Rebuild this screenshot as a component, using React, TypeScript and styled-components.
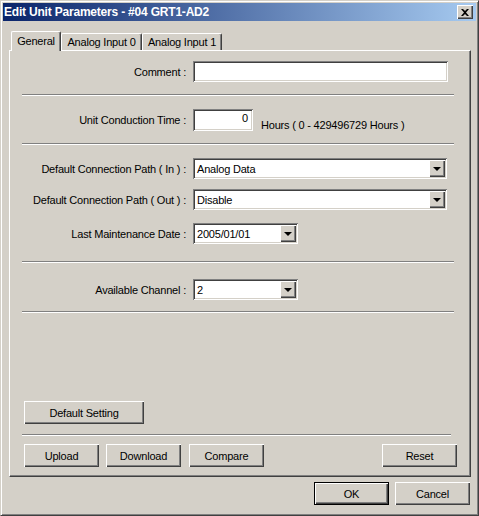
import React from "react";
import styled, { createGlobalStyle } from "styled-components";

const face = "#d4d0c8";
const shade = "#808080";
const dark = "#404040";
const light = "#ffffff";

const GlobalStyle = createGlobalStyle`
  html, body {
    margin: 0;
    padding: 0;
    background: ${face};
  }
  body {
    font-family: "Liberation Sans", Arial, sans-serif;
    font-size: 11px;
    letter-spacing: -0.2px;
    color: #000;
  }
  * { box-sizing: border-box; }
`;

const Window = styled.div`
  width: 479px;
  height: 516px;
  display: flex;
  flex-direction: column;
  background: ${face};
  border: 1px solid;
  border-color: ${face} ${dark} ${dark} ${face};
  box-shadow: inset 1px 1px ${light}, inset -1px -1px ${shade};
  padding: 2px 2px 10px 2px;
`;

const TitleBar = styled.div`
  height: 18px;
  flex: 0 0 18px;
  display: flex;
  align-items: center;
  justify-content: space-between;
  padding: 0 3px 0 1px;
  background: linear-gradient(to right, #0a246a, #a6caf0);
`;

const Title = styled.span`
  color: #fff;
  font-weight: bold;
  font-size: 12px;
  white-space: nowrap;
`;

const CloseButton = styled.div`
  width: 16px;
  height: 14px;
  display: flex;
  align-items: center;
  justify-content: center;
  background: ${face};
  box-shadow: inset 1px 1px ${light}, inset -1px -1px ${dark}, inset -2px -2px ${shade};
`;

const Body = styled.div`
  flex: 1;
  display: flex;
  flex-direction: column;
  padding: 0 5px 0 6px;
`;

const TabStrip = styled.div`
  margin-top: 10px;
  height: 19px;
  display: flex;
  align-items: flex-end;
  padding-left: 2px;
  position: relative;
  z-index: 1;
`;

const Tab = styled.div<{ $active?: boolean; $w: number }>`
  width: ${(p) => p.$w}px;
  height: ${(p) => (p.$active ? 20 : 17)}px;
  margin-bottom: ${(p) => (p.$active ? -1 : 0)}px;
  background: ${face};
  border-top: 1px solid ${light};
  border-left: 1px solid ${light};
  border-right: 1px solid ${dark};
  border-radius: 2px 2px 0 0;
  box-shadow: inset -1px 0 ${shade};
  display: flex;
  justify-content: center;
  padding-top: ${(p) => (p.$active ? 3 : 2)}px;
  white-space: nowrap;
`;

const Panel = styled.div`
  flex: 1;
  display: flex;
  flex-direction: column;
  border-top: 1px solid ${light};
  border-left: 1px solid ${light};
  border-right: 1px solid ${dark};
  border-bottom: 1px solid ${dark};
  box-shadow: inset -1px -1px ${shade};
  padding-bottom: 9px;
`;

const Row = styled.div<{ $top: number; $align?: string }>`
  margin-top: ${(p) => p.$top}px;
  display: flex;
  align-items: ${(p) => p.$align || "center"};
  gap: 7px;
`;

const Label = styled.span<{ $offset?: number }>`
  flex: 0 0 176px;
  margin-top: ${(p) => p.$offset || 0}px;
  text-align: right;
  white-space: nowrap;
`;

const Separator = styled.div<{ $top: number; $w: number }>`
  margin: ${(p) => p.$top}px 0 0 12px;
  width: ${(p) => p.$w}px;
  height: 2px;
  border-top: 1px solid ${shade};
  border-bottom: 1px solid ${light};
`;

const sunken = `
  background: #fff;
  box-shadow: inset 1px 1px ${shade}, inset -1px -1px ${light}, inset 2px 2px ${dark}, inset -2px -2px ${face};
`;

const TextBox = styled.div<{ $w: number; $h?: number }>`
  ${sunken}
  width: ${(p) => p.$w}px;
  height: ${(p) => p.$h || 21}px;
  padding: 3px 5px 0 4px;
  text-align: right;
`;

const Combo = styled.div<{ $w: number }>`
  ${sunken}
  width: ${(p) => p.$w}px;
  height: 21px;
  display: flex;
  align-items: center;
  padding: 2px;
`;

const ComboValue = styled.span`
  flex: 1;
  padding-left: 2px;
  white-space: nowrap;
`;

const DropButton = styled.div`
  width: 16px;
  height: 17px;
  background: ${face};
  box-shadow: inset 1px 1px ${light}, inset -1px -1px ${dark}, inset -2px -2px ${shade};
  display: flex;
  align-items: center;
  justify-content: center;
`;

const Arrow = styled.div`
  width: 0;
  height: 0;
  border-left: 4px solid transparent;
  border-right: 4px solid transparent;
  border-top: 4px solid #000;
  margin: 1px 0 0 -1px;
`;

const Hint = styled.span`
  margin: 10px 0 0 1px;
  line-height: 12px;
  white-space: nowrap;
`;

const Spacer = styled.div`
  flex: 1;
`;

const Button = styled.div<{ $w: number; $default?: boolean }>`
  width: ${(p) => p.$w}px;
  height: 23px;
  flex: 0 0 auto;
  display: flex;
  align-items: center;
  justify-content: center;
  background: ${face};
  white-space: nowrap;
  border: ${(p) => (p.$default ? "1px solid #000" : "none")};
  box-shadow: inset 1px 1px ${light}, inset -1px -1px ${dark}, inset -2px -2px ${shade};
`;

const ButtonRow = styled.div<{ $top: number }>`
  margin: ${(p) => p.$top}px 13px 0 14px;
  display: flex;
  gap: 7px;
`;

const PushRight = styled.div`
  flex: 1;
`;

const Footer = styled.div`
  margin-top: 5px;
  display: flex;
  justify-content: flex-end;
  gap: 6px;
  padding-right: 1px;
`;

function ComboBox({ width, value }: { width: number; value: string }) {
  return (
    <Combo $w={width}>
      <ComboValue>{value}</ComboValue>
      <DropButton>
        <Arrow />
      </DropButton>
    </Combo>
  );
}

export default function App() {
  return (
    <>
      <GlobalStyle />
      <Window>
        <TitleBar>
          <Title>Edit Unit Parameters - #04 GRT1-AD2</Title>
          <CloseButton>
            <svg width="8" height="7" viewBox="0 0 8 7">
              <path d="M0 0h2l2 2 2-2h2L5 3.5 8 7H6L4 5 2 7H0l3-3.5z" fill="#000" />
            </svg>
          </CloseButton>
        </TitleBar>
        <Body>
          <TabStrip>
            <Tab $active $w={50}>General</Tab>
            <Tab $w={81}>Analog Input 0</Tab>
            <Tab $w={80}>Analog Input 1</Tab>
          </TabStrip>
          <Panel>
            <Row $top={10}>
              <Label>Comment :</Label>
              <TextBox $w={255} />
            </Row>
            <Separator $top={12} $w={432} />
            <Row $top={13} $align="flex-start">
              <Label $offset={5}>Unit Conduction Time :</Label>
              <TextBox $w={60} $h={22}>0</TextBox>
              <Hint>Hours ( 0 - 429496729 Hours )</Hint>
            </Row>
            <Separator $top={12} $w={432} />
            <Row $top={13}>
              <Label>Default Connection Path ( In ) :</Label>
              <ComboBox width={254} value="Analog Data" />
            </Row>
            <Row $top={10}>
              <Label>Default Connection Path ( Out ) :</Label>
              <ComboBox width={254} value="Disable" />
            </Row>
            <Row $top={13}>
              <Label>Last Maintenance Date :</Label>
              <ComboBox width={105} value="2005/01/01" />
            </Row>
            <Separator $top={17} $w={432} />
            <Row $top={16}>
              <Label>Available Channel :</Label>
              <ComboBox width={105} value="2" />
            </Row>
            <Separator $top={11} $w={432} />
            <Spacer />
            <ButtonRow $top={0}>
              <Button $w={120}>Default Setting</Button>
            </ButtonRow>
            <Separator $top={10} $w={429} />
            <ButtonRow $top={8}>
              <Button $w={75}>Upload</Button>
              <Button $w={75}>Download</Button>
              <Button $w={75} style={{ marginLeft: 1 }}>Compare</Button>
              <PushRight />
              <Button $w={75}>Reset</Button>
            </ButtonRow>
          </Panel>
          <Footer>
            <Button $w={75} $default>OK</Button>
            <Button $w={75}>Cancel</Button>
          </Footer>
        </Body>
      </Window>
    </>
  );
}
